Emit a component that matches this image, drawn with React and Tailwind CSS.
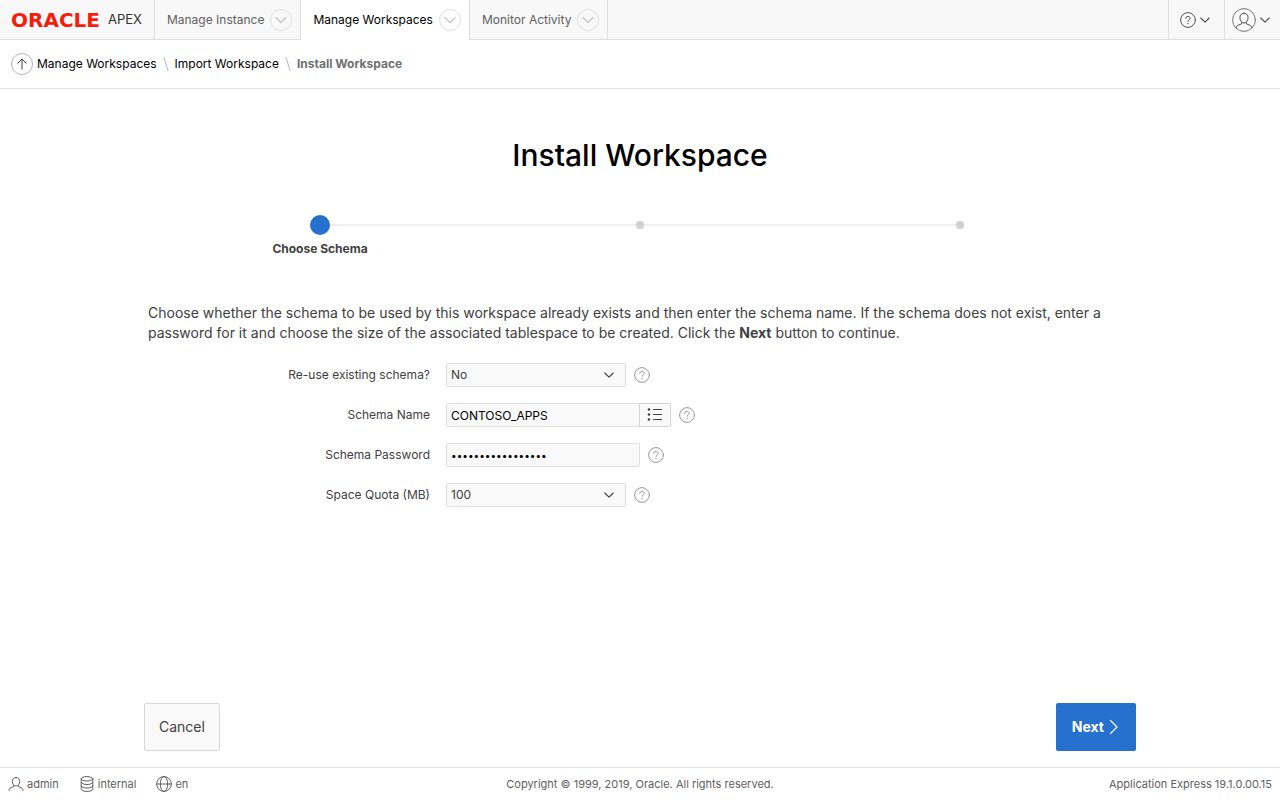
import React from "react";

function Icon({ size = 16, children, className = "", stroke = 1 }) {
  return (
    <svg
      aria-hidden="true"
      width={size}
      height={size}
      viewBox={`0 0 ${size} ${size}`}
      fill="none"
      stroke="currentColor"
      strokeWidth={stroke}
      strokeLinecap="round"
      strokeLinejoin="round"
      className={`shrink-0 ${className}`}
    >
      {children}
    </svg>
  );
}

function Chevron({ className = "" }) {
  return (
    <Icon size={10} className={className} stroke={1.1}>
      <path d="M0.8 3 5 7.2 9.2 3" />
    </Icon>
  );
}

function Question({ className = "", stroke = 1 }) {
  return (
    <Icon size={16} className={className} stroke={stroke}>
      <circle cx="8" cy="8" r="7.4" />
      <path d="M5.8 6.4C5.8 5.100 6.700 4.400 8 4.400s2.200.8 2.200 2c0 1.500-2.200 1.500-2.200 2.900" />
      <circle cx="8" cy="11.5" r="0.7" fill="currentColor" stroke="none" />
    </Icon>
  );
}

function Person() {
  return (
    <Icon size={16}>
      <path d="M8 1.5c-2.2 0-3.7 1.6-3.7 4S6 10 8 10s3.7-2.1 3.7-4.5S10.200 1.500 8 1.500Z" />
      <path d="M5.800 9.500v1L2.300 12C1.500 12.400 1.100 13.300 1 14.500M10.200 9.500v1l3.500 1.500c.8.400 1.200 1.300 1.300 2.500" />
    </Icon>
  );
}

function NavTab({ label, active }) {
  return (
    <div
      className={`flex items-center gap-1.5 border-r border-[#dfdfdf] pr-2 pl-3 ${
        active ? "bg-white text-black" : "border-b bg-[#f8f8f8] text-[#606060]"
      }`}
    >
      <a href="#" aria-current={active ? "page" : undefined}>
        {label}
      </a>
      <button
        type="button"
        aria-label={`${label} menu`}
        className="flex size-[22px] items-center justify-center rounded-full border border-[#e0e0e0] text-[#9a9a9a]"
      >
        <Icon size={12}>
          <path d="M1 3.500 6 8.500 11 3.500" />
        </Icon>
      </button>
    </div>
  );
}

function Separator() {
  return (
    <Icon size={16} className="mx-px text-[#b8b8b8]">
      <path d="M6 1.500 10 14.500" />
    </Icon>
  );
}

function Field({ id, label, children }) {
  return (
    <div className="flex items-center">
      <label htmlFor={id} className="w-[286px] text-right text-[#404040]">
        {label}
      </label>
      <div className="ml-4 flex items-center gap-2">
        {children}
        <button type="button" aria-label={`Help: ${label}`} className="text-[#999]">
          <Question />
        </button>
      </div>
    </div>
  );
}

function SelectBox({ id, options }) {
  return (
    <div className="relative">
      <select
        id={id}
        className="block h-6 w-[180px] appearance-none rounded-xs border border-[#dfdfdf] bg-[#f9f9f9] px-1 text-[#404040]"
      >
        {options.map((o) => (
          <option key={o}>{o}</option>
        ))}
      </select>
      <Chevron className="pointer-events-none absolute top-[7px] right-3 text-[#404040]" />
    </div>
  );
}

function Steps() {
  return (
    <ol className="mx-auto mt-10 grid w-3/4 grid-cols-3">
      <li className="flex flex-col items-center gap-1">
        <div className="grid w-full grid-cols-[1fr_20px_1fr] items-center">
          <span />
          <span className="size-5 rounded-full bg-[#2771ce]" />
          <span className="h-[2px] bg-[#efefef]" />
        </div>
        <span className="leading-5 font-bold text-[#404040]">Choose Schema</span>
      </li>
      <li className="grid h-5 grid-cols-[1fr_8px_1fr] items-center">
        <span className="h-[2px] bg-[#efefef]" />
        <span className="size-2 rounded-full bg-[#d0d0d0]" />
        <span className="h-[2px] bg-[#efefef]" />
      </li>
      <li className="grid h-5 grid-cols-[1fr_8px_1fr] items-center">
        <span className="h-[2px] bg-[#efefef]" />
        <span className="size-2 rounded-full bg-[#d0d0d0]" />
        <span />
      </li>
    </ol>
  );
}

export default function App() {
  return (
    <div className="flex min-h-screen flex-col bg-white font-['Inter',sans-serif] text-xs text-black">
      <header className="flex h-10 bg-[#f8f8f8]">
        <a
          href="#"
          className="flex items-center gap-2 border-r border-b border-[#dfdfdf] pr-3 pl-[11px] text-[#303030]"
        >
          <span className="font-['DejaVu_Sans',sans-serif] text-[20px] leading-5 font-bold text-[#f81c0a]">
            ORACLE
          </span>
          <span className="text-[13px]">APEX</span>
        </a>
        <nav className="flex">
          <NavTab label="Manage Instance" />
          <NavTab label="Manage Workspaces" active />
          <NavTab label="Monitor Activity" />
        </nav>
        <div className="flex-1 border-b border-[#dfdfdf]" />
        <button
          type="button"
          aria-label="Help"
          className="flex w-14 items-center justify-center gap-1 border-b border-l border-[#dfdfdf] pr-1 text-[#505050]"
        >
          <Question />
          <Chevron />
        </button>
        <button
          type="button"
          aria-label="Account"
          className="flex w-14 items-center justify-center gap-1 border-b border-l border-[#dfdfdf] pr-1 text-[#505050]"
        >
          <Icon size={24}>
            <circle cx="12" cy="12" r="11.400" stroke="#777" />
            <path d="M12 5.200c-2.500 0-4.100 1.800-4.100 4.500S9.700 15 12 15s4.100-2.600 4.100-5.300S14.500 5.200 12 5.200Z" />
            <path d="M9.700 14.500v1.300L5.500 17.500C4.900 17.800 4.400 18.500 4.200 19.500M14.300 14.500v1.300l4.200 1.700c.6.300 1.100 1 1.300 2" />
          </Icon>
          <Chevron />
        </button>
      </header>

      <nav
        aria-label="Breadcrumb"
        className="flex h-[49px] items-center border-b border-[#dfdfdf] px-[11px]"
      >
        <a
          href="#"
          aria-label="Up"
          className="mr-1 flex size-[22px] items-center justify-center rounded-full border border-[#b0b4b8] text-[#404040]"
        >
          <Icon size={12}>
            <path d="M6 11.200V1.200M1.800 5.200 6 1l4.200 4.200" />
          </Icon>
        </a>
        <a href="#">Manage Workspaces</a>
        <Separator />
        <a href="#">Import Workspace</a>
        <Separator />
        <span aria-current="page" className="font-bold text-[#707070]">
          Install Workspace
        </span>
      </nav>

      <form
        className="mx-auto flex w-full max-w-[1280px] flex-1 flex-col pt-[46px]"
        onSubmit={(e) => e.preventDefault()}
      >
        <h1 className="text-center text-[30px] leading-10 font-medium">Install Workspace</h1>
        <Steps />
        <div className="mx-auto w-full max-w-[992px] px-1">
          <p className="mt-11 text-sm leading-5 text-[#404040]">
            Choose whether the schema to be used by this workspace already exists and then enter the
            schema name. If the schema does not exist, enter a password for it and choose the size of
            the associated tablespace to be created. Click the <b>Next</b> button to continue.
          </p>
          <div className="-ml-1 mt-5 flex flex-col gap-4">
            <Field id="reuse" label="Re-use existing schema?">
              <SelectBox id="reuse" options={["No", "Yes"]} />
            </Field>
            <Field id="schema" label="Schema Name">
              <div className="flex">
                <input
                  id="schema"
                  type="text"
                  defaultValue="CONTOSO_APPS"
                  className="h-6 w-[194px] rounded-l-xs border border-[#dfdfdf] bg-[#f9f9f9] px-1 text-black"
                />
                <button
                  type="button"
                  aria-label="List schemas"
                  className="-ml-px flex h-6 w-8 items-center justify-center rounded-r-xs border border-[#d4d4d4] bg-[#f9f9f9] text-[#404040]"
                >
                  <Icon size={16}>
                    <path d="M6.500 2.500h8M6.500 7.500h8M6.500 12.500h8" />
                    <g fill="currentColor" stroke="none">
                      <circle cx="2" cy="2.500" r="1.300" />
                      <circle cx="2" cy="7.500" r="1.300" />
                      <circle cx="2" cy="12.500" r="1.300" />
                    </g>
                  </Icon>
                </button>
              </div>
            </Field>
            <Field id="password" label="Schema Password">
              <input
                id="password"
                type="password"
                defaultValue="contosoapps123456"
                className="h-6 w-[194px] rounded-xs border border-[#dfdfdf] bg-[#f9f9f9] px-1 text-[10px] text-black"
              />
            </Field>
            <Field id="quota" label="Space Quota (MB)">
              <SelectBox id="quota" options={["100", "250", "500"]} />
            </Field>
          </div>
        </div>
        <div className="mx-auto mt-auto flex w-full max-w-[992px] justify-between pb-4 text-sm">
          <button
            type="button"
            className="h-12 rounded-xs border border-[#d8d8d8] bg-[#f9f9f9] px-3.5 text-[#404040]"
          >
            Cancel
          </button>
          <button
            type="submit"
            className="flex h-12 items-center gap-1 rounded-xs bg-[#2771ce] px-4 font-bold text-white"
          >
            Next
            <svg
              aria-hidden="true"
              width="12"
              height="16"
              viewBox="0 0 12 16"
              fill="none"
              stroke="currentColor"
              strokeWidth="1.200"
              strokeLinecap="round"
              strokeLinejoin="round"
            >
              <path d="M2.500 1.500 9 8 2.500 14.500" />
            </svg>
          </button>
        </div>
      </form>

      <footer className="grid h-[33px] grid-cols-[1fr_auto_1fr] items-center border-t border-[#dfdfdf] px-2 text-[11px] text-[#606060]">
        <div className="flex items-center gap-5">
          <span className="flex items-center gap-[3px]">
            <Person />
            admin
          </span>
          <span className="flex items-center gap-[3px]">
            <Icon size={16}>
              <ellipse cx="8" cy="2.800" rx="5.800" ry="2.200" />
              <path d="M2.200 2.800v10.400c0 1.200 2.600 2.200 5.800 2.200s5.800-1 5.800-2.200V2.800M2.200 6.300c0 1.200 2.600 2.200 5.800 2.200s5.800-1 5.800-2.200M2.200 9.800c0 1.200 2.600 2.200 5.800 2.200s5.800-1 5.800-2.200" />
            </Icon>
            internal
          </span>
          <span className="flex items-center gap-[3px]">
            <Icon size={16}>
              <circle cx="8" cy="8" r="7.400" />
              <ellipse cx="8" cy="8" rx="3.700" ry="7.400" />
              <path d="M.6 8h14.800" />
            </Icon>
            en
          </span>
        </div>
        <p>Copyright © 1999, 2019, Oracle. All rights reserved.</p>
        <p className="text-right">Application Express 19.1.0.00.15</p>
      </footer>
    </div>
  );
}
